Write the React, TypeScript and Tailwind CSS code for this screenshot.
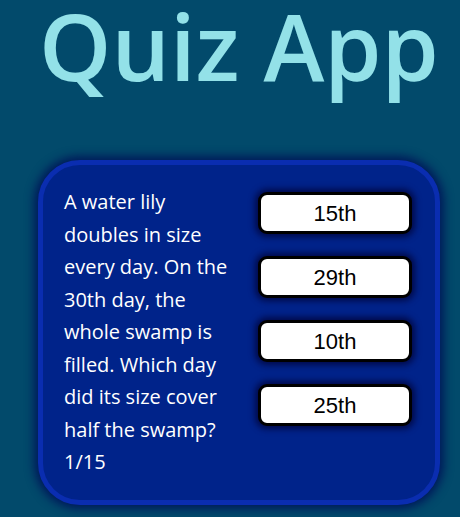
const options = ["15th", "29th", "10th", "25th"]

const AnswerButton = ({ label }: { label: string }) => (
    <button className="h-[42px] w-[154px] shrink-0 rounded-[9px] border-[3px] border-black bg-white text-[22px] text-black shadow-[0_0_6px_3px_#000a4a] font-['Liberation_Sans',Arial,sans-serif]">
        {label}
    </button>
)

export default function App() {
    return (
        <div className="min-h-[517px] w-full bg-[#024a6b] flex flex-col items-center font-['Open_Sans',sans-serif]">
            <h1 className="ml-[18px] text-[92px] leading-[92px] font-semibold text-[#93e1e8]">Quiz App</h1>
            <div className="mt-[68px] ml-[18px] flex w-[402px] h-[345px] gap-[22px] rounded-[42px] border-[5px] border-[#0a2db0] bg-[#00238a] pl-[21px] pt-[21px] shadow-[0_0_10px_4px_#00195a]">
                <div className="w-[172px] text-[20px] leading-[32.5px] text-white">
                    A water lily doubles in size every day. On the 30th day, the whole swamp is filled. Which day did its size cover half the swamp?
                    <div>1/15</div>
                </div>
                <div className="flex flex-col gap-[22px] pt-[6px]">
                    {options.map((o) => <AnswerButton key={o} label={o} />)}
                </div>
            </div>
        </div>
    )
}
